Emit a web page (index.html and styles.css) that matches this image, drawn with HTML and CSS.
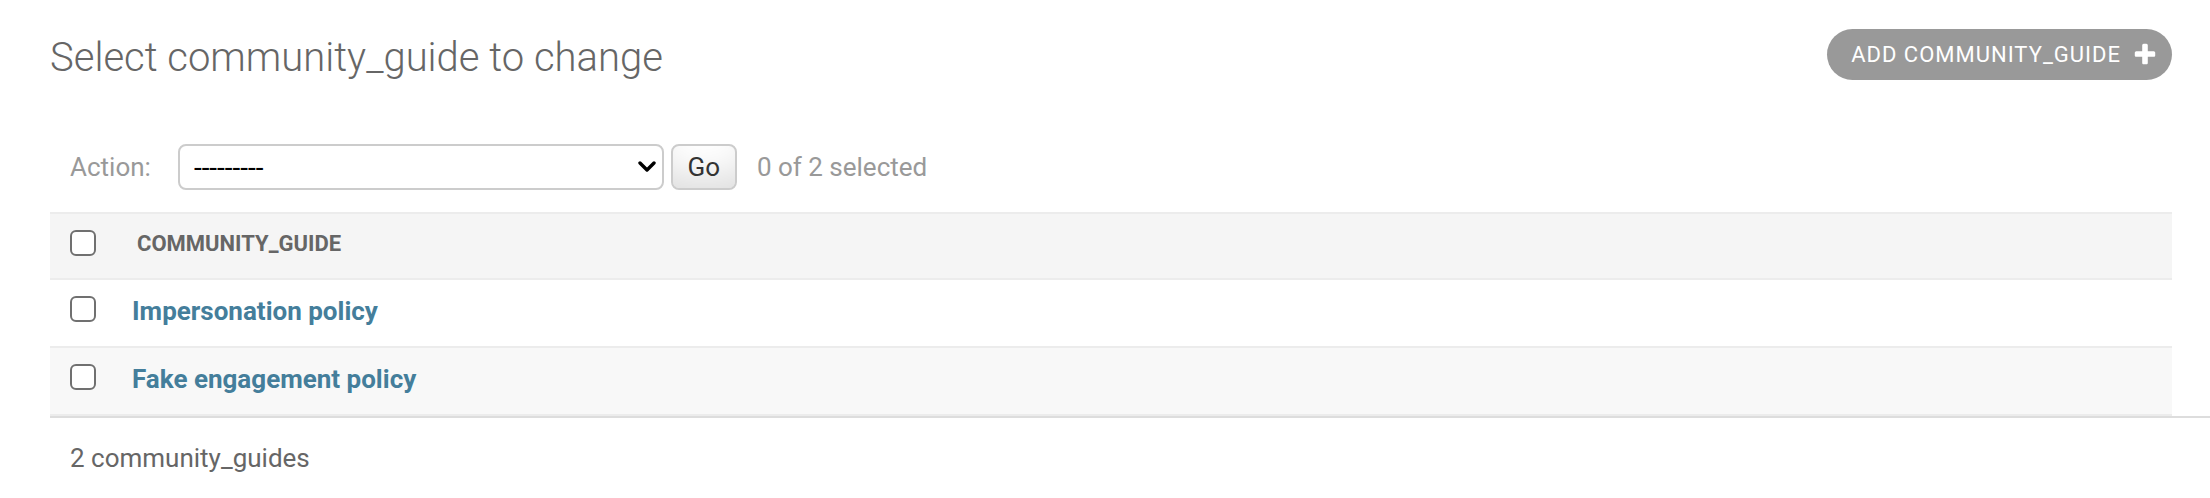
FILE: index.html
```html
<!DOCTYPE html>
<html lang="en">
<head>
<meta charset="utf-8">
<title>Select community_guide to change</title>
<link rel="stylesheet" href="styles.css">
</head>
<body>
<div class="page">
  <div class="top">
    <h1 class="title">Select community_guide to change</h1>
    <a class="addlink" href="#">ADD COMMUNITY_GUIDE<svg class="plus" width="26" height="26" viewBox="0 0 1792 1792"><path fill="#ffffff" d="M1600 736v192q0 40-28 68t-68 28h-416v416q0 40-28 68t-68 28h-192q-40 0-68-28t-28-68v-416h-416q-40 0-68-28t-28-68v-192q0-40 28-68t68-28h416v-416q0-40 28-68t68-28h192q40 0 68 28t28 68v416h416q40 0 68 28t28 68z"/></svg></a>
  </div>

  <div class="actions">
    <span class="action-label">Action:</span>
    <span class="select-wrap">
      <select class="action-select"><option>---------</option></select>
      <svg class="chevron" width="18" height="11" viewBox="0 0 18 11"><path d="M2 2l7 7 7-7" fill="none" stroke="#000" stroke-width="3.4" stroke-linecap="round" stroke-linejoin="round"/></svg>
    </span>
    <button class="go" type="button">Go</button>
    <span class="counter">0 of 2 selected</span>
  </div>

  <div class="results">
    <table class="result-list">
      <thead>
        <tr>
          <th class="col-check"><div class="cell head-cell"><input type="checkbox" class="cb"></div></th>
          <th class="col-name"><div class="cell head-cell"><span class="head-text">COMMUNITY_GUIDE</span></div></th>
        </tr>
      </thead>
      <tbody>
        <tr class="row1">
          <td class="col-check"><div class="cell"><input type="checkbox" class="cb"></div></td>
          <td class="col-name"><div class="cell"><a class="obj-link" href="#">Impersonation policy</a></div></td>
        </tr>
        <tr class="row2">
          <td class="col-check"><div class="cell"><input type="checkbox" class="cb"></div></td>
          <td class="col-name"><div class="cell"><a class="obj-link" href="#">Fake engagement policy</a></div></td>
        </tr>
      </tbody>
    </table>
  </div>

  <p class="paginator">2 community_guides</p>
</div>
</body>
</html>
```

FILE: styles.css
```css
* { box-sizing: border-box; }

html, body {
  margin: 0;
  padding: 0;
  background: #fff;
}

body {
  font-family: Roboto, "Liberation Sans", Arial, sans-serif;
  color: #333;
}

.page {
  padding: 28px 0 0 50px;
}

.top {
  display: flex;
  justify-content: space-between;
  align-items: flex-start;
  height: 52px;
  margin-right: 38px;
}

.title {
  margin: 7px 0 0;
  font-size: 40px;
  line-height: 45px;
  font-weight: 300;
  color: #666;
}

.addlink {
  display: flex;
  align-items: center;
  height: 51px;
  margin-top: 1px;
  padding: 0 14px 0 24px;
  background: #999;
  color: #fff;
  text-decoration: none;
  font-size: 22px;
  font-weight: 400;
  letter-spacing: 1px;
  border-radius: 30px;
}

.plus {
  display: block;
  margin-left: 11px;
}

.actions {
  display: flex;
  align-items: center;
  margin: 44px 38px 0 0;
  padding: 20px 20px 22px;
  height: 88px;
  color: #999;
  font-size: 26px;
}

.select-wrap {
  position: relative;
  display: block;
  margin-left: 27px;
}

.action-select {
  display: block;
  appearance: none;
  -webkit-appearance: none;
  width: 486px;
  height: 46px;
  border: 2px solid #ccc;
  border-radius: 8px;
  background: #fff;
  color: #000;
  font-family: Roboto, "Liberation Sans", Arial, sans-serif;
  font-size: 28px;
  padding: 0 0 0 14px;
  margin: 0;
}

.chevron {
  position: absolute;
  right: 8px;
  top: 17px;
  pointer-events: none;
}

.go {
  display: block;
  margin-left: 7px;
  width: 66px;
  height: 46px;
  border: 2px solid #ccc;
  border-radius: 8px;
  background: #fff;
  box-shadow: 0 -30px 40px -20px rgba(0, 0, 0, 0.15) inset;
  color: #333;
  font-family: Roboto, "Liberation Sans", Arial, sans-serif;
  font-size: 26px;
  line-height: 1;
  padding: 0;
}

.counter {
  margin-left: 20px;
}

.results {
  margin-right: 38px;
}

.result-list {
  width: 100%;
  border-collapse: separate;
  border-spacing: 0;
}

.result-list th,
.result-list td {
  padding: 0;
  text-align: left;
  vertical-align: top;
}

.result-list thead th {
  background: #f5f5f5;
  border-top: 2px solid #ececec;
  border-bottom: 2px solid #ececec;
}

.result-list tbody td {
  border-bottom: 2px solid #ececec;
}

.row1 td { background: #fff; }
.row2 td { background: #f8f8f8; }

.col-check { width: 66px; }

.cell {
  display: flex;
  align-items: flex-start;
  height: 66px;
  padding: 16px 0 0 16px;
}

.col-check .cell {
  padding-left: 20px;
}

.head-cell {
  height: 64px;
}

.col-name .head-cell {
  padding-left: 21px;
}

.cb {
  appearance: none;
  -webkit-appearance: none;
  display: block;
  width: 26px;
  height: 26px;
  margin: 0;
  border: 2px solid #707070;
  border-radius: 6px;
  background: #fff;
}

.head-text {
  font-size: 22px;
  line-height: 28px;
  font-weight: 700;
  color: #666;
}

.obj-link {
  font-size: 26px;
  line-height: 30px;
  font-weight: 700;
  color: #447e9b;
  text-decoration: none;
}

.paginator {
  margin: 0;
  border-top: 2px solid #ddd;
  padding: 18px 20px 22px;
  font-size: 26px;
  line-height: 44px;
  color: #666;
}
```
